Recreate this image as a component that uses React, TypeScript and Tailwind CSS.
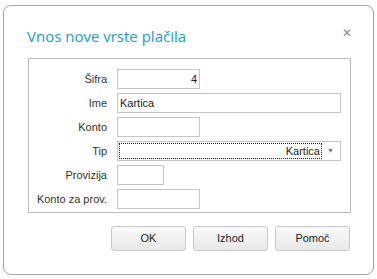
import React from "react"

const Field = ({ label, width, value, right }: { label: string, width: string, value?: string, right?: boolean }) => {
    return (
        <div className="flex items-center h-[24px]">
            <span className="w-[88px] shrink-0 whitespace-nowrap text-right pr-[10px] text-[11px] text-[#333]">{label}</span>
            <div className={`${width} h-[20px] border border-[#c6c6c6] bg-white flex items-center px-[2px] text-[11px] text-[#222] ${right ? "justify-end" : ""}`}>
                {value}
            </div>
        </div>
    )
}

const Btn = ({ text }: { text: string }) => (
    <button className="w-[75px] h-[25px] border border-[#c9c9c9] rounded-[3px] bg-gradient-to-b from-[#fafafa] to-[#e8e8e8] text-[11px] text-[#222]">
        {text}
    </button>
)

export default function App() {
    return (
        <div className="w-[377px] h-[279px] bg-white pt-[5px] pl-[3px] font-['Liberation_Sans',Arial,sans-serif]">
            <div className="w-[371px] h-[270px] border border-[#a3a3a3] rounded-[8px] bg-white">
                <div className="flex items-center justify-between pl-[23px] pr-[21px] pt-[17px] h-[44px]">
                    <span className="font-['Open_Sans',sans-serif] text-[15px] text-[#1b9bd7]">Vnos nove vrste plačila</span>
                    <span className="text-[12px] text-[#8a8a8a] leading-none -mt-[8px]">✕</span>
                </div>
                <div className="ml-[24px] mt-[8px] w-[323px] h-[155px] border border-[#bdbdbd] pt-[8px]">
                    <Field label="Šifra" width="w-[83px]" value="4" right />
                    <Field label="Ime" width="w-[224px]" value="Kartica" />
                    <Field label="Konto" width="w-[83px]" />
                    <div className="flex items-center h-[24px]">
                        <span className="w-[88px] shrink-0 text-right pr-[10px] text-[11px] text-[#333]">Tip</span>
                        <div className="w-[224px] h-[20px] border border-[#c6c6c6] bg-white flex items-center p-[1px]">
                            <div className="flex-1 h-full border border-dotted border-[#222] flex items-center justify-end pr-[1px] text-[11px] text-[#222]">Kartica</div>
                            <span className="w-[17px] text-center text-[7px] text-[#777]">▼</span>
                        </div>
                    </div>
                    <Field label="Provizija" width="w-[47px]" />
                    <Field label="Konto za prov." width="w-[83px]" />
                </div>
                <div className="flex justify-end gap-[7px] pr-[23px] mt-[13px]">
                    <Btn text="OK" />
                    <Btn text="Izhod" />
                    <Btn text="Pomoč" />
                </div>
            </div>
        </div>
    )
}
